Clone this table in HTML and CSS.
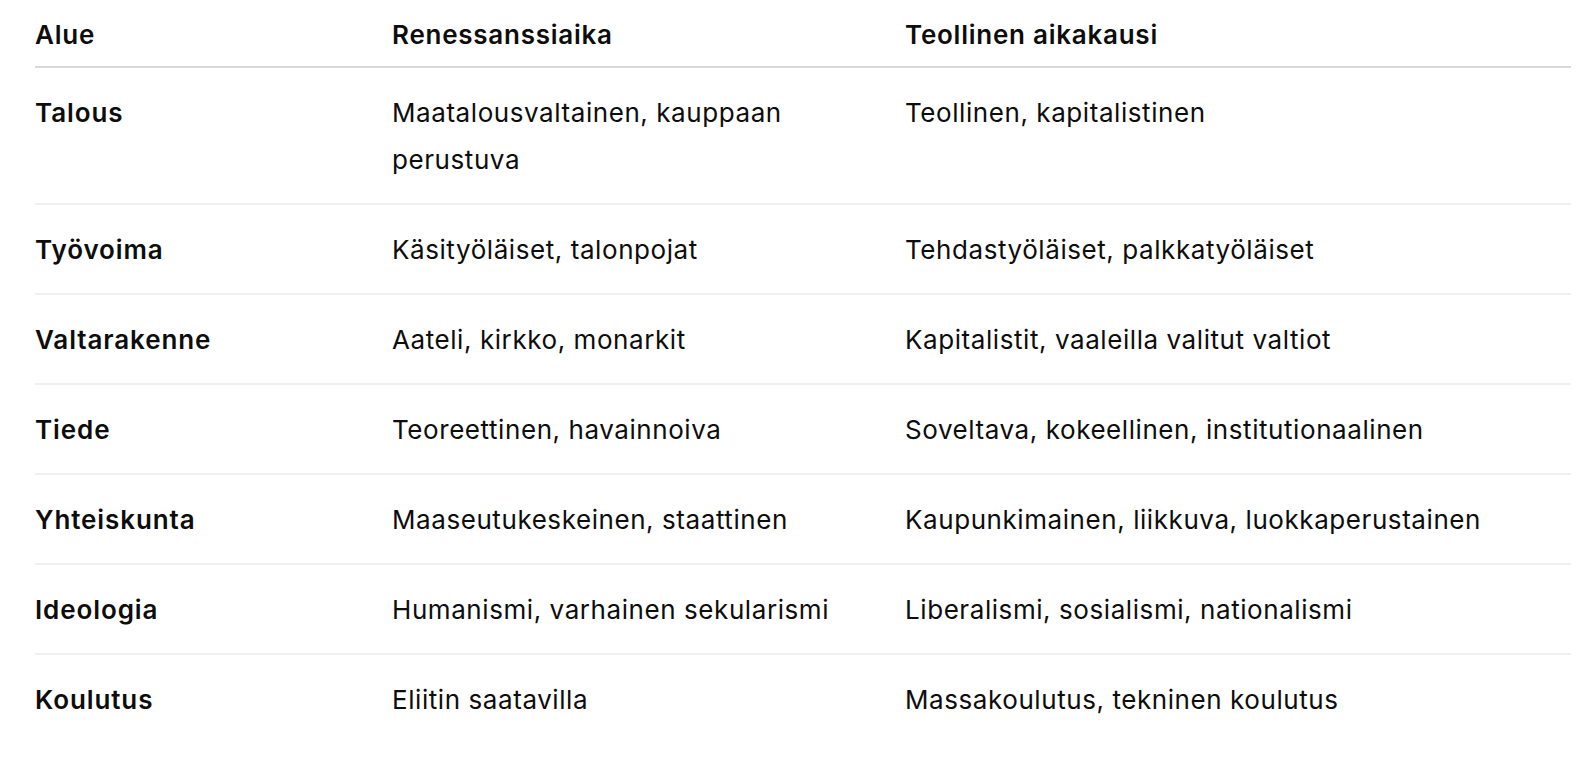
FILE: index.html
```html
<!DOCTYPE html>
<html lang="fi">
<head>
<meta charset="utf-8">
<link rel="stylesheet" href="styles.css">
</head>
<body>
<table class="cmp">
  <thead>
    <tr><th class="c1">Alue</th><th class="c2">Renessanssiaika</th><th class="c3">Teollinen aikakausi</th></tr>
  </thead>
  <tbody>
    <tr><td class="key">Talous</td><td>Maatalousvaltainen, kauppaan perustuva</td><td>Teollinen, kapitalistinen</td></tr>
    <tr><td class="key">Työvoima</td><td>Käsityöläiset, talonpojat</td><td>Tehdastyöläiset, palkkatyöläiset</td></tr>
    <tr><td class="key">Valtarakenne</td><td>Aateli, kirkko, monarkit</td><td>Kapitalistit, vaaleilla valitut valtiot</td></tr>
    <tr><td class="key">Tiede</td><td>Teoreettinen, havainnoiva</td><td>Soveltava, kokeellinen, institutionaalinen</td></tr>
    <tr><td class="key">Yhteiskunta</td><td>Maaseutukeskeinen, staattinen</td><td>Kaupunkimainen, liikkuva, luokkaperustainen</td></tr>
    <tr><td class="key">Ideologia</td><td>Humanismi, varhainen sekularismi</td><td>Liberalismi, sosialismi, nationalismi</td></tr>
    <tr><td class="key">Koulutus</td><td>Eliitin saatavilla</td><td>Massakoulutus, tekninen koulutus</td></tr>
  </tbody>
</table>
</body>
</html>
```
FILE: styles.css
```css
html, body {
  margin: 0;
  padding: 0;
  background: #ffffff;
}
body {
  font-family: Inter, "Noto Sans", "Liberation Sans", sans-serif;
  font-size: 26px;
  line-height: 47px;
  color: #0d0d0d;
  padding: 11px 24px 0 35px;
}
.cmp {
  width: 1536px;
  border-collapse: collapse;
  table-layout: fixed;
}
.c1 { width: 357px; }
.c2 { width: 513px; }
.cmp th {
  text-align: left;
  font-weight: 600;
  letter-spacing: 0.75px;
  padding: 0 0 8px 0;
  border-bottom: 2px solid #d9d9d9;
  vertical-align: top;
}
.cmp td {
  padding: 20.5px 24px 20.5px 0;
  vertical-align: top;
  font-weight: 400;
  letter-spacing: 0.57px;
  border-bottom: 2px solid #f0f0f0;
}
.cmp tbody tr:last-child td {
  border-bottom: none;
}
.cmp td.key {
  font-weight: 600;
  letter-spacing: 0.9px;
}
```
